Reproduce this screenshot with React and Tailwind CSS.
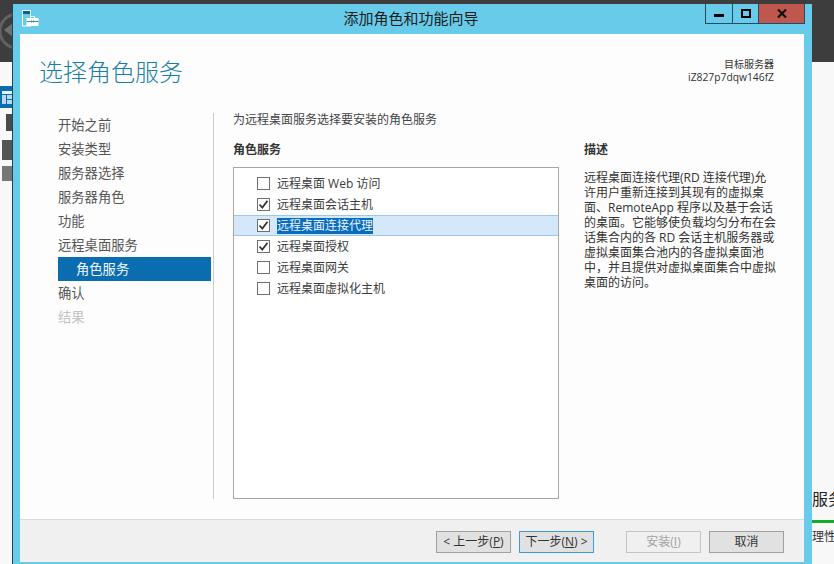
const font = { fontFamily: '"Open Sans", "Noto Sans CJK SC", sans-serif' };

function NavItem({ label, active, disabled }) {
  return (
    <div
      className={
        "h-6 flex items-center pt-[2px] text-[13.3px] " +
        (active
          ? "bg-[#0a6db0] text-[#f4f8fb] pl-[18px]"
          : disabled
          ? "text-[#c4c4c4]"
          : "text-[#555555]")
      }
    >
      {label}
    </div>
  );
}

function Check({ label, checked, focused }) {
  return (
    <div
      className={
        "h-[21px] flex items-center pl-[23px] gap-[7px] text-xs text-[#3c3c3c] border-y " +
        (focused ? "bg-[#d4e8f9] border-[#9cc8e8]" : "border-transparent")
      }
    >
      <div className="w-[13px] h-[13px] border border-[#707070] bg-white flex items-center justify-center shrink-0">
        {checked && (
          <svg width="11" height="11" viewBox="0 0 11 11">
            <path d="M1.5 5.5 L4.3 8.5 L9.5 1.8" fill="none" stroke="#333" strokeWidth="1.8" />
          </svg>
        )}
      </div>
      <span className={focused ? "bg-[#0a6cbc] text-[#eaf3fb] leading-[16px]" : ""}>{label}</span>
    </div>
  );
}

function Btn({ children, kind }) {
  const cls =
    kind === "default"
      ? "bg-[#e1e1e1] border-[#3f9bd8] text-[#333333]"
      : kind === "disabled"
      ? "bg-[#f0f0f0] border-[#c4c4c4] text-[#a2a2a2]"
      : "bg-[#e1e1e1] border-[#a0a0a0] text-[#333333]";
  return (
    <div className={"w-[75px] h-[22px] border flex items-center justify-center text-xs whitespace-pre " + cls}>
      {children}
    </div>
  );
}

function TitleIcon() {
  return (
    <svg width="17" height="17" viewBox="0 0 17 17">
      <rect x="0.5" y="0.5" width="8" height="15.5" fill="#68cbe9" stroke="#fff" />
      <rect x="1" y="1" width="7" height="3" fill="#0e5f96" />
      <rect x="4.5" y="8" width="12" height="8" fill="#fff" />
      <path d="M8.5 8 V6.5 H12.5 V8" fill="none" stroke="#fff" />
      <path d="M4.5 11.5 H16.5 M9.5 10.5 V12.5 M11.5 10.5 V12.5" stroke="#3a8fb8" strokeWidth="1" fill="none" />
    </svg>
  );
}

export default function App() {
  return (
    <div className="relative w-[834px] h-[564px] overflow-hidden bg-[#f8f8f8]" style={font}>
      {/* Desktop behind the dialog */}
      <div className="h-[62px] bg-[#3d3d3d]">
        <svg width="14" height="62" viewBox="0 0 14 62" className="block">
          <circle cx="17" cy="31" r="17" fill="none" stroke="#626262" strokeWidth="3" />
          <path d="M4 30 L13 23 V37 Z" fill="#707070" />
        </svg>
      </div>
      <div className="flex flex-col gap-[6px] pt-[24px] w-[13px]">
        <div className="h-[22px] bg-[#0a6db0] flex items-center">
          <svg width="13" height="22" viewBox="0 0 13 22" className="block">
            <rect x="2" y="5" width="11" height="3" fill="#e6f2fa" />
            <rect x="2" y="9" width="4" height="9" fill="#b9d8ee" />
            <rect x="7" y="9" width="6" height="4" fill="#b9d8ee" />
            <rect x="7" y="14" width="6" height="4" fill="#b9d8ee" />
          </svg>
        </div>
        <div className="ml-[6px] h-[17px] bg-[#4a4a4a]" />
        <div className="ml-[2px] h-[20px] mt-[3px] bg-[#555555]" />
        <div className="ml-[2px] h-[15px] bg-[#777777]" />
      </div>
      <div className="absolute left-[812px] top-[489px] w-[22px] overflow-hidden whitespace-nowrap text-[16px] leading-[20px] text-[#222222]">
        服务器
      </div>
      <div className="absolute left-[812px] top-[520px] w-[22px] h-[3px] bg-[#12ad2b]" />
      <div className="absolute left-[812px] top-[529px] w-[22px] overflow-hidden whitespace-nowrap text-[12px] leading-[16px] text-[#333333]">
        理性
      </div>

      {/* Dialog window */}
      <div className="absolute left-[12px] top-[4px] w-[800px] h-[561px] bg-[#68cbe9] border-l border-[#16485a] flex flex-col pl-[7px] pr-[8px]">
        <div className="h-[30px] relative flex items-center justify-center text-[15px] text-[#1c1c1c] shrink-0">
          <div className="absolute left-[2px] top-[6px]">
            <TitleIcon />
          </div>
          <span className="-mt-[2px] -ml-[2px]">添加角色和功能向导</span>
          <div className="absolute right-[-1px] top-0 h-[20px] flex border border-t-0 border-[#1e4e62]">
            <div className="w-[27px] flex items-center justify-center border-r border-[#1e4e62]">
              <div className="w-[10px] h-[3px] bg-black mt-[4px]" />
            </div>
            <div className="w-[25px] flex items-center justify-center">
              <div className="w-[10px] h-[9px] border-2 border-black" />
            </div>
            <div className="w-[46px] bg-[#c0574e] flex items-center justify-center border-l border-[#1e4e62]">
              <svg width="10" height="9" viewBox="0 0 10 9">
                <path d="M1 0.5 L9 8.5 M9 0.5 L1 8.5" stroke="#111" strokeWidth="2.2" />
              </svg>
            </div>
          </div>
        </div>

        <div className="w-[784px] h-[528px] bg-white flex flex-col shrink-0">
          <div className="flex-1 min-h-0 bg-[#fdfdfd] flex flex-col">
            {/* Header */}
            <div className="h-[79px] flex justify-between pl-[20px] pr-[30px] shrink-0">
              <h1 className="text-[24px] leading-[32px] mt-[22px] -ml-px font-light text-[#1a7fa8]">选择角色服务</h1>
              <div className="text-right text-[10.3px] leading-[13px] text-[#333333] mt-[24px]">
                <div className="text-[10px]">目标服务器</div>
                <div>iZ827p7dqw146fZ</div>
              </div>
            </div>

            <div className="flex-1 min-h-0 flex pb-[20px]">
              {/* Nav */}
              <div className="w-[153px] ml-[38px] shrink-0">
                <NavItem label="开始之前" />
                <NavItem label="安装类型" />
                <NavItem label="服务器选择" />
                <NavItem label="服务器角色" />
                <NavItem label="功能" />
                <NavItem label="远程桌面服务" />
                <NavItem label="角色服务" active />
                <NavItem label="确认" />
                <NavItem label="结果" disabled />
              </div>
              <div className="w-px ml-[2px] bg-[#cccccc] shrink-0" />

              {/* Main */}
              <div className="w-[326px] ml-[19px] flex flex-col shrink-0">
                <div className="text-xs leading-[16px] h-[16px] mt-[-1px] text-[#444444]">为远程桌面服务选择要安装的角色服务</div>
                <div className="text-xs leading-[16px] mt-[14px] font-bold text-[#333333]">角色服务</div>
                <div className="mt-[9px] flex-1 border border-[#a6a6a6] bg-white pt-[5px]">
                  <Check label="远程桌面 Web 访问" />
                  <Check label="远程桌面会话主机" checked />
                  <Check label="远程桌面连接代理" checked focused />
                  <Check label="远程桌面授权" checked />
                  <Check label="远程桌面网关" />
                  <Check label="远程桌面虚拟化主机" />
                </div>
              </div>

              {/* Description */}
              <div className="ml-[25px] w-[200px] pt-[29px] text-xs text-[#333333] shrink-0">
                <div className="leading-[16px] font-bold">描述</div>
                <p className="mt-[12px] leading-[15px] whitespace-nowrap">
                  远程桌面连接代理(RD 连接代理)允<br />
                  许用户重新连接到其现有的虚拟桌<br />
                  面、RemoteApp 程序以及基于会话<br />
                  的桌面。它能够使负载均匀分布在会<br />
                  话集合内的各 RD 会话主机服务器或<br />
                  虚拟桌面集合池内的各虚拟桌面池<br />
                  中，并且提供对虚拟桌面集合中虚拟<br />
                  桌面的访问。
                </p>
              </div>
            </div>
          </div>

          {/* Footer */}
          <div className="h-[43px] shrink-0 bg-[#f0f0f0] border-t border-[#dcdcdc] flex items-center pl-[416px] pt-[1px]">
            <Btn>{"< 上一步("}<span className="underline">P</span>{")"}</Btn>
            <div className="ml-[8px]"><Btn kind="default">{"下一步("}<span className="underline">N</span>{") >"}</Btn></div>
            <div className="ml-[32px]"><Btn kind="disabled">{"安装("}<span className="underline">I</span>{")"}</Btn></div>
            <div className="ml-[8px]"><Btn>取消</Btn></div>
          </div>
        </div>
      </div>
    </div>
  );
}
